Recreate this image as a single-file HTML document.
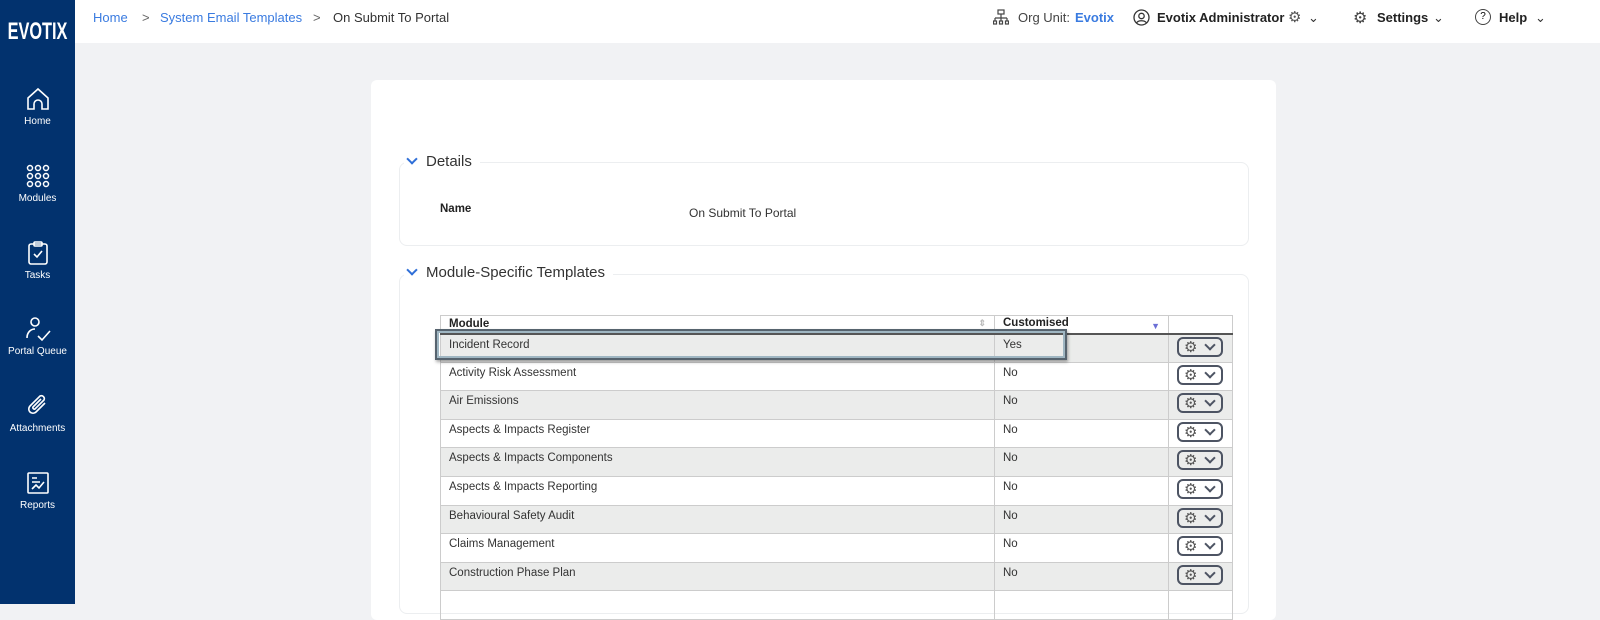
<!DOCTYPE html>
<html><head><meta charset="utf-8"><style>
*{box-sizing:border-box;margin:0;padding:0}
body{width:1600px;height:604px;overflow:hidden;background:#f1f2f4;font-family:"Liberation Sans",sans-serif;position:relative}
.side{position:absolute;left:0;top:0;width:75px;height:604px;background:#02326e}
.logo{position:absolute;left:-10px;top:18px;width:95px;text-align:center;color:#fff;font-weight:bold;font-size:24px;transform:scaleX(.68)}
.nav{position:absolute;left:0;width:75px;text-align:center;color:#fff;font-size:10px}
.nav svg{display:block;margin:0 auto 4px}
.top{position:absolute;left:75px;top:0;right:0;height:43px;background:#fff;font-size:13px}
.top span{position:absolute;top:10px}
.b{color:#3a7be0}
.card{position:absolute;left:371px;top:80px;width:905px;height:540px;background:#fff;border-radius:6px}
.fs{position:absolute;border:1px solid #eceef0;border-radius:8px}
.leg{position:absolute;background:#fff;font-size:15px;color:#333;padding-right:8px}
.leg i{display:inline-block;width:8px;height:8px;border-right:2px solid #2f6fd8;border-bottom:2px solid #2f6fd8;transform:rotate(45deg);margin:0 10px 3px 4px}
table{position:absolute;left:440px;top:315px;border-collapse:collapse;font-size:11.5px;color:#333}
td{border:1px solid #ccc;height:28.6px;vertical-align:top;padding:4px 8px}
th{border:1px solid #ccc;border-bottom:2px solid #555;height:18px;text-align:left;padding:0 8px;font-size:11.5px;font-weight:bold;color:#222;background:#fff}
tr.g td{background:#ebeceb}
.btn{display:inline-block;width:46px;height:20px;border:2px solid #4d5463;border-radius:6px;margin-top:-1px;position:relative}
.btn b{position:absolute;left:5px;top:-1px;font-size:15px;color:#555;font-weight:normal}
.btn i{position:absolute;left:27px;top:2px;width:8px;height:8px;border-right:2px solid #4d5463;border-bottom:2px solid #4d5463;transform:rotate(45deg)}
td.a{padding:3px 0 0 8px}
</style></head><body>
<div class="side">
<div class="logo">EVOTIX</div>
<div class="nav" style="top:86px"><svg width="26" height="26" viewBox="0 0 26 26" fill="none" stroke="#fff" stroke-width="1.6"><path d="M3 12L13 3l10 9v11H17v-5a4 4 0 0 0-8 0v5H3z"/></svg>Home</div>
<div class="nav" style="top:163px"><svg width="26" height="26" viewBox="0 0 26 26" fill="none" stroke="#fff" stroke-width="1.5"><circle cx="5" cy="5" r="2.5"/><circle cx="13" cy="5" r="2.5"/><circle cx="21" cy="5" r="2.5"/><circle cx="5" cy="13" r="2.5"/><circle cx="13" cy="13" r="2.5"/><circle cx="21" cy="13" r="2.5"/><circle cx="5" cy="21" r="2.5"/><circle cx="13" cy="21" r="2.5"/><circle cx="21" cy="21" r="2.5"/></svg>Modules</div>
<div class="nav" style="top:240px"><svg width="26" height="26" viewBox="0 0 26 26" fill="none" stroke="#fff" stroke-width="1.6"><rect x="4" y="4" width="18" height="20" rx="2"/><rect x="9" y="2" width="8" height="4" rx="1"/><path d="M9 14l3 3 5-6"/></svg>Tasks</div>
<div class="nav" style="top:316px"><svg width="28" height="26" viewBox="0 0 28 26" fill="none" stroke="#fff" stroke-width="1.6"><circle cx="11" cy="6" r="4"/><path d="M3 22c0-6 4-9 8-9M14 20l4 4 8-9"/></svg>Portal Queue</div>
<div class="nav" style="top:393px"><svg width="26" height="26" viewBox="0 0 26 26" fill="none" stroke="#fff" stroke-width="1.6"><path d="M20 10l-9 9a4 4 0 0 1-6-6l10-10a3 3 0 0 1 4 4l-9 9a1.5 1.5 0 0 1-2-2l8-8"/></svg>Attachments</div>
<div class="nav" style="top:470px"><svg width="26" height="26" viewBox="0 0 26 26" fill="none" stroke="#fff" stroke-width="1.6"><rect x="3" y="3" width="20" height="20" rx="1"/><path d="M7 8h5M7 12h8M7 19l4-4 3 3 5-6"/></svg>Reports</div>
</div>
<div class="top">
<span class="b" style="left:18px">Home</span><span style="left:67px;color:#666">&gt;</span>
<span class="b" style="left:85px">System Email Templates</span><span style="left:238px;color:#666">&gt;</span>
<span style="left:258px;color:#333">On Submit To Portal</span>
<span style="left:918px;top:9px"><svg width="16" height="18" viewBox="0 0 16 18" fill="none" stroke="#444" stroke-width="1.2"><rect x="5" y="1" width="6" height="4"/><path d="M8 5v4M2 9h12M2 9v3M8 9v3M14 9v3"/><rect x="0.5" y="12" width="3" height="3"/><rect x="6.5" y="12" width="3" height="3"/><rect x="12.5" y="12" width="3" height="3"/></svg></span>
<span style="left:943px;color:#444">Org Unit:</span><span class="b" style="left:1000px;font-weight:bold">Evotix</span>
<span style="left:1058px;top:9px"><svg width="17" height="17" viewBox="0 0 17 17" fill="none" stroke="#333" stroke-width="1.3"><circle cx="8.5" cy="8.5" r="7.5"/><circle cx="8.5" cy="7" r="2.7"/><path d="M3.5 14c1.5-3 8.5-3 10 0"/></svg></span>
<span style="left:1082px;font-weight:bold;color:#222">Evotix Administrator</span>
<span style="left:1213px;top:8px;font-size:15px;color:#555">&#9881;</span><span style="left:1233px;color:#333">&#8964;</span>
<span style="left:1278px;top:8px;font-size:16px;color:#444">&#9881;</span>
<span style="left:1302px;font-weight:bold;color:#222">Settings</span><span style="left:1358px;color:#333">&#8964;</span>
<span style="left:1400px;top:9px;width:16px;height:16px;border:1.5px solid #444;border-radius:50%;font-size:10px;text-align:center;line-height:13px">?</span>
<span style="left:1424px;font-weight:bold;color:#222">Help</span><span style="left:1460px;color:#333">&#8964;</span>
</div>
<div class="card"></div>
<div class="fs" style="left:399px;top:162px;width:850px;height:84px"></div>
<div class="leg" style="left:404px;top:153px"><i></i>Details</div>
<div style="position:absolute;left:440px;top:203px;font-size:11.5px;font-weight:bold;color:#222">Name</div>
<div style="position:absolute;left:689px;top:206px;font-size:12px;color:#333">On Submit To Portal</div>
<div class="fs" style="left:399px;top:274px;width:850px;height:340px"></div>
<div class="leg" style="left:404px;top:264px"><i></i>Module-Specific Templates</div>
<table>
<tr><th style="width:554px">Module <span style="float:right;color:#bbb;font-size:9px">&#8661;</span></th><th style="width:174px">Customised <span style="float:right;color:#6b6fd6;font-size:9px;margin-top:4px">&#9660;</span></th><th style="width:64px"></th></tr>
<tr class="g"><td>Incident Record</td><td>Yes</td><td class="a"><span class="btn"><b>&#9881;</b><i></i></span></td></tr>
<tr><td>Activity Risk Assessment</td><td>No</td><td class="a"><span class="btn"><b>&#9881;</b><i></i></span></td></tr>
<tr class="g"><td>Air Emissions</td><td>No</td><td class="a"><span class="btn"><b>&#9881;</b><i></i></span></td></tr>
<tr><td>Aspects &amp; Impacts Register</td><td>No</td><td class="a"><span class="btn"><b>&#9881;</b><i></i></span></td></tr>
<tr class="g"><td>Aspects &amp; Impacts Components</td><td>No</td><td class="a"><span class="btn"><b>&#9881;</b><i></i></span></td></tr>
<tr><td>Aspects &amp; Impacts Reporting</td><td>No</td><td class="a"><span class="btn"><b>&#9881;</b><i></i></span></td></tr>
<tr class="g"><td>Behavioural Safety Audit</td><td>No</td><td class="a"><span class="btn"><b>&#9881;</b><i></i></span></td></tr>
<tr><td>Claims Management</td><td>No</td><td class="a"><span class="btn"><b>&#9881;</b><i></i></span></td></tr>
<tr class="g"><td>Construction Phase Plan</td><td>No</td><td class="a"><span class="btn"><b>&#9881;</b><i></i></span></td></tr>
<tr><td>&nbsp;</td><td></td><td></td></tr>
</table>
<div style="position:absolute;left:435px;top:329px;width:632px;height:31px;border:2px solid #56636e;outline:2px solid #9fb6c2;outline-offset:-4px;box-shadow:1px 2px 3px rgba(0,0,0,.35)"></div>
</body></html>
